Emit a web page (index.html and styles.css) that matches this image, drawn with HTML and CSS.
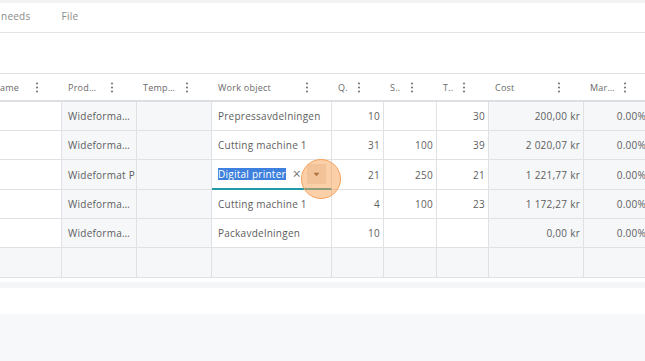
FILE: index.html
```html
<!DOCTYPE html>
<html>
<head>
<meta charset="utf-8">
<link rel="stylesheet" href="styles.css">
</head>
<body>
<div class="topstrip"></div>
<nav class="tabs">
  <span class="tab tab-first">needs</span>
  <span class="tab">File</span>
</nav>
<div class="toolbar"></div>
<div class="gridwrap">
  <div class="grid">
    <div class="hcell hfirst"><span>ame</span><svg class="kebab" viewBox="0 0 4 11"><circle cx="2" cy="1.5" r="1.1"/><circle cx="2" cy="5.5" r="1.1"/><circle cx="2" cy="9.5" r="1.1"/></svg></div>
    <div class="hcell"><span>Prod…</span><svg class="kebab" viewBox="0 0 4 11"><circle cx="2" cy="1.5" r="1.1"/><circle cx="2" cy="5.5" r="1.1"/><circle cx="2" cy="9.5" r="1.1"/></svg></div>
    <div class="hcell"><span>Temp…</span><svg class="kebab" viewBox="0 0 4 11"><circle cx="2" cy="1.5" r="1.1"/><circle cx="2" cy="5.5" r="1.1"/><circle cx="2" cy="9.5" r="1.1"/></svg></div>
    <div class="hcell"><span>Work object</span><svg class="kebab" viewBox="0 0 4 11"><circle cx="2" cy="1.5" r="1.1"/><circle cx="2" cy="5.5" r="1.1"/><circle cx="2" cy="9.5" r="1.1"/></svg></div>
    <div class="hcell"><span>Q.</span><svg class="kebab" viewBox="0 0 4 11"><circle cx="2" cy="1.5" r="1.1"/><circle cx="2" cy="5.5" r="1.1"/><circle cx="2" cy="9.5" r="1.1"/></svg></div>
    <div class="hcell"><span>S..</span><svg class="kebab" viewBox="0 0 4 11"><circle cx="2" cy="1.5" r="1.1"/><circle cx="2" cy="5.5" r="1.1"/><circle cx="2" cy="9.5" r="1.1"/></svg></div>
    <div class="hcell"><span>T..</span><svg class="kebab" viewBox="0 0 4 11"><circle cx="2" cy="1.5" r="1.1"/><circle cx="2" cy="5.5" r="1.1"/><circle cx="2" cy="9.5" r="1.1"/></svg></div>
    <div class="hcell"><span>Cost</span><svg class="kebab" viewBox="0 0 4 11"><circle cx="2" cy="1.5" r="1.1"/><circle cx="2" cy="5.5" r="1.1"/><circle cx="2" cy="9.5" r="1.1"/></svg></div>
    <div class="hcell"><span>Mar…</span><svg class="kebab" viewBox="0 0 4 11"><circle cx="2" cy="1.5" r="1.1"/><circle cx="2" cy="5.5" r="1.1"/><circle cx="2" cy="9.5" r="1.1"/></svg></div>

    <div class="cell"></div>
    <div class="cell shade">Wideforma…</div>
    <div class="cell shade"></div>
    <div class="cell">Prepressavdelningen</div>
    <div class="cell num">10</div>
    <div class="cell num"></div>
    <div class="cell num">30</div>
    <div class="cell num shade">200,00 kr</div>
    <div class="cell num shade">0.00%</div>

    <div class="cell"></div>
    <div class="cell shade">Wideforma…</div>
    <div class="cell shade"></div>
    <div class="cell">Cutting machine 1</div>
    <div class="cell num">31</div>
    <div class="cell num">100</div>
    <div class="cell num">39</div>
    <div class="cell num shade">2 020,07 kr</div>
    <div class="cell num shade">0.00%</div>

    <div class="cell tall"></div>
    <div class="cell tall shade">Wideformat P</div>
    <div class="cell tall shade"></div>
    <div class="cell tall editing">
      <span class="selected">Digital printer</span>
      <span class="clear">×</span>
      <span class="dropbtn"><svg viewBox="0 0 8 6" class="tri"><path d="M0.5 0.8 H7.5 L4 5.2 Z"/></svg></span>
      <span class="click"></span>
    </div>
    <div class="cell tall num">21</div>
    <div class="cell tall num">250</div>
    <div class="cell tall num">21</div>
    <div class="cell tall num shade">1 221,77 kr</div>
    <div class="cell tall num shade">0.00%</div>

    <div class="cell"></div>
    <div class="cell shade">Wideforma…</div>
    <div class="cell shade"></div>
    <div class="cell">Cutting machine 1</div>
    <div class="cell num">4</div>
    <div class="cell num">100</div>
    <div class="cell num">23</div>
    <div class="cell num shade">1 172,27 kr</div>
    <div class="cell num shade">0.00%</div>

    <div class="cell"></div>
    <div class="cell shade">Wideforma…</div>
    <div class="cell shade"></div>
    <div class="cell">Packavdelningen</div>
    <div class="cell num">10</div>
    <div class="cell num"></div>
    <div class="cell num"></div>
    <div class="cell num shade">0,00 kr</div>
    <div class="cell num shade">0.00%</div>

    <div class="cell tall shade"></div>
    <div class="cell tall shade"></div>
    <div class="cell tall shade"></div>
    <div class="cell tall shade"></div>
    <div class="cell tall shade"></div>
    <div class="cell tall shade"></div>
    <div class="cell tall shade"></div>
    <div class="cell tall shade"></div>
    <div class="cell tall shade"></div>
  </div>
</div>
<div class="gap"></div>
<div class="scrolltrack"></div>
<div class="footer"></div>
</body>
</html>
```

FILE: styles.css
```css
html, body {
  margin: 0;
  padding: 0;
}
body {
  width: 645px;
  height: 361px;
  overflow: hidden;
  background: #f7f8fa;
  font-family: "Open Sans", "Liberation Sans", sans-serif;
  font-size: 10px;
  letter-spacing: 0.25px;
  color: #5e5e5e;
}
.topstrip {
  height: 3px;
  background: #f2f3f5;
}
.tabs {
  height: 30px;
  box-sizing: border-box;
  padding: 0 0 3px 1px;
  background: #fff;
  border-bottom: 1px solid #e2e3e5;
  display: flex;
  align-items: center;
  gap: 31px;
}
.tab {
  color: #8a8a8a;
  font-size: 10px;
}
.toolbar {
  height: 40px;
  background: #fff;
}
.gridwrap {
  width: 645px;
  overflow: hidden;
  background: #fff;
  border-top: 1px solid #e2e3e5;
}
.grid {
  display: grid;
  width: 700px;
  grid-template-columns: 62px 75px 75px 120px 52px 53px 52px 95px 66px;
}
.hcell {
  height: 28px;
  box-sizing: border-box;
  border-bottom: 2px solid #dcdee1;
  display: flex;
  align-items: center;
  justify-content: space-between;
  padding: 0 23px 0 6px;
  font-size: 9px;
  color: #6a6a6a;
  white-space: nowrap;
  overflow: hidden;
}
.hfirst {
  padding-left: 0;
}
.kebab {
  width: 4px;
  height: 11px;
  fill: #7a7a7a;
  flex: none;
}
.cell {
  height: 29px;
  box-sizing: border-box;
  border-right: 1px solid #dfe1e4;
  border-bottom: 1px solid #dfe1e4;
  background: #fff;
  display: flex;
  align-items: center;
  padding: 0 6px;
  white-space: nowrap;
  overflow: hidden;
}
.cell.tall {
  height: 30px;
}
.cell.shade {
  background: #f5f7f9;
}
.cell.num {
  justify-content: flex-end;
  padding: 0 3px 0 4px;
}
.cell.editing {
  position: relative;
  overflow: visible;
  border-bottom: 2px solid #1f9aa6;
  padding: 0 3px 0 6px;
}
.selected {
  background: #3d80dd;
  color: #fff;
  padding: 1px 0;
  line-height: 10px;
}
.clear {
  margin-left: 7px;
  color: #777;
  font-size: 14px;
  line-height: 10px;
}
.dropbtn {
  margin-left: 6px;
  width: 19px;
  height: 20px;
  background: #ece6e0;
  display: flex;
  align-items: center;
  justify-content: center;
}
.tri {
  width: 7px;
  height: 5px;
  fill: #6b4633;
}
.click {
  position: absolute;
  left: 89px;
  top: -1px;
  width: 38px;
  height: 38px;
  border-radius: 50%;
  background: rgba(248, 160, 80, 0.5);
  border: 1.5px solid #f6a35c;
}
.gap {
  height: 4px;
  background: #fff;
}
.scrolltrack {
  height: 6px;
  background: #f5f6f8;
}
.footer {
  height: 26px;
  background: #fff;
}
```
